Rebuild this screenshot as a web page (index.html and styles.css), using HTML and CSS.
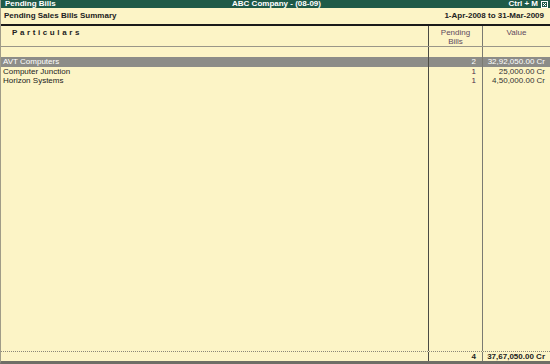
FILE: index.html
```html
<!DOCTYPE html>
<html>
<head>
<meta charset="utf-8">
<link rel="stylesheet" href="styles.css">
</head>
<body>
<div class="win">
  <div class="titlebar">
    <span class="t-left">Pending Bills</span>
    <span class="t-center">ABC Company - (08-09)</span>
    <span class="t-right">Ctrl + M <span class="closebox"><svg width="7" height="7" viewBox="0 0 7 7"><rect x="0.5" y="0.5" width="6" height="6" fill="none" stroke="#fff" stroke-width="1"/><path d="M2 2 L5 5 M5 2 L2 5" stroke="#fff" stroke-width="1"/></svg></span></span>
  </div>
  <div class="subbar">
    <span>Pending Sales Bills Summary</span>
    <span>1-Apr-2008 to 31-Mar-2009</span>
  </div>
  <div class="row head">
    <div class="c1 particulars">Particulars</div>
    <div class="c2 colhead">Pending<br>Bills</div>
    <div class="c3 colhead">Value</div>
  </div>
  <div class="body">
    <div class="row line spacer"><div class="c1"></div><div class="c2"></div><div class="c3"></div></div>
    <div class="row line sel"><div class="c1">AVT Computers</div><div class="c2 num">2</div><div class="c3 val">32,92,050.00 Cr</div></div>
    <div class="row line"><div class="c1">Computer Junction</div><div class="c2 num">1</div><div class="c3 val">25,000.00 Cr</div></div>
    <div class="row line"><div class="c1">Horizon Systems</div><div class="c2 num">1</div><div class="c3 val">4,50,000.00 Cr</div></div>
    <div class="row filler"><div class="c1"></div><div class="c2"></div><div class="c3"></div></div>
  </div>
  <div class="row total">
    <div class="c1"></div>
    <div class="c2 num">4</div>
    <div class="c3 val">37,67,050.00 Cr</div>
  </div>
</div>
</body>
</html>
```
FILE: styles.css
```css
* { box-sizing: border-box; }
html, body { margin: 0; padding: 0; }
body {
  width: 550px;
  height: 364px;
  overflow: hidden;
  font-family: "Liberation Sans", Arial, sans-serif;
  font-size: 8px;
  color: #1a1a1a;
}
.win {
  width: 550px;
  height: 364px;
  display: flex;
  flex-direction: column;
  background: #fcf4c6;
  border-left: 1px solid #a09c88;
  border-bottom: 3px solid #6e6e66;
}
.titlebar {
  height: 8px;
  flex: none;
  background: #1f5a48;
  color: #fff;
  font-weight: bold;
  font-size: 8px;
  line-height: 8px;
  display: grid;
  grid-template-columns: 1fr auto 1fr;
  align-items: center;
  padding: 0 2px 0 4px;
  overflow: hidden;
}
.t-center { text-align: center; }
.t-right { justify-self: end; display: flex; align-items: center; gap: 3px; }
.closebox { display: flex; }
.subbar {
  height: 18px;
  flex: none;
  display: flex;
  justify-content: space-between;
  align-items: center;
  padding: 0 6px 2px 3px;
  font-weight: bold;
  color: #222;
  border-bottom: 2px solid #1a1a1a;
}
.row {
  display: grid;
  grid-template-columns: 428px 54px 1fr;
}
.row > div { overflow: hidden; white-space: nowrap; }
.row .c1 { border-right: 1px solid #4a4a44; padding-left: 2px; }
.row .c2 { border-right: 1px solid #7a7a72; }
.head {
  height: 21px;
  flex: none;
  border-bottom: 1px solid #9a9688;
}
.particulars {
  font-weight: bold;
  letter-spacing: 2.6px;
  padding-left: 11px !important;
  padding-top: 2px;
  color: #222;
}
.colhead {
  text-align: center;
  color: #5e4a5e;
  line-height: 9px;
  padding-top: 2px;
}
.body {
  flex: 1;
  display: flex;
  flex-direction: column;
}
.line { height: 9.5px; line-height: 9.5px; flex: none; }
.spacer { height: 10px; }
.sel { background: #8c8c88; color: #fff; }
.sel .num, .sel .val { color: #fff; }
.filler { flex: 1; }
.num { text-align: right; padding-right: 6px; color: #4a2a4a; }
.val { text-align: right; padding-right: 5px; color: #333; }
.total {
  height: 10px;
  flex: none;
  line-height: 9px;
  font-weight: bold;
  border-top: 1px dotted #8a8678;
}
.total .num, .total .val { color: #222; }
```
